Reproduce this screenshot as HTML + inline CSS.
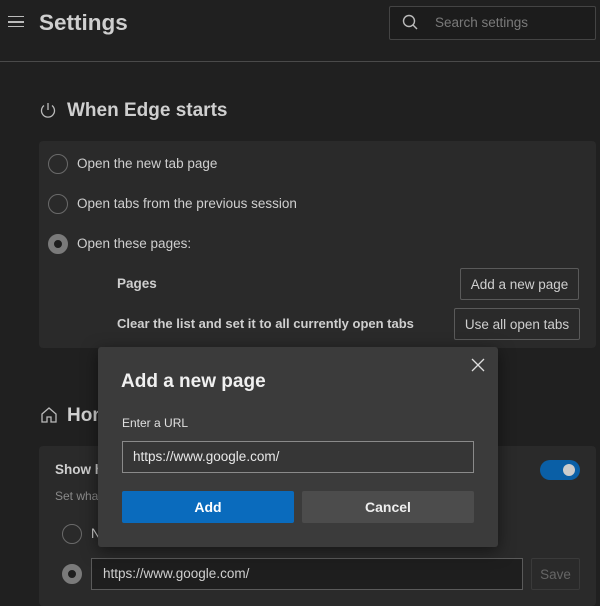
<!DOCTYPE html>
<html><head><style>
*{margin:0;padding:0;box-sizing:border-box}
body{width:600px;height:600px;background:#202020;font-family:"Liberation Sans",sans-serif;color:#d6d6d6;position:relative;overflow:hidden}
.a{position:absolute}
.card{background:#2a2a2a;border-radius:4px}
.radio{width:20px;height:20px;border:1.5px solid #6a6a6a;border-radius:50%}
.radio.on{border:6px solid #7a7a7a;background:#1e1e1e}
.t{font-size:13.5px;color:#cfcfcf;white-space:nowrap}
.btn{border:1px solid #5a5a5a;font-size:13.5px;color:#cfcfcf;display:flex;align-items:center;justify-content:center;border-radius:2px}
</style></head><body>
<div class="a" style="left:8px;top:16px;width:16px;height:11px;border-top:1.5px solid #bbb;border-bottom:1.5px solid #bbb"></div>
<div class="a" style="left:8px;top:21px;width:16px;height:1.5px;background:#bbb"></div>
<div class="a" style="left:39px;top:10px;font-size:22.5px;font-weight:bold;color:#cfcfcf">Settings</div>
<div class="a" style="left:389px;top:6px;width:207px;height:34px;border:1px solid #444;background:#1c1c1c;border-radius:2px"></div>
<svg class="a" style="left:401px;top:13px" width="20" height="20"><circle cx="8" cy="8" r="5.5" fill="none" stroke="#bbb" stroke-width="1.4"/><line x1="12" y1="12" x2="16" y2="16" stroke="#bbb" stroke-width="1.4"/></svg>
<div class="a" style="left:435px;top:15px;font-size:13.5px;color:#7a7a7a">Search settings</div>
<div class="a" style="left:0;top:61px;width:600px;height:1px;background:#4a4a4a"></div>
<svg class="a" style="left:39px;top:101px" width="18" height="18"><path d="M5 4.5A6.5 6.5 0 1 0 13 4.5" fill="none" stroke="#bbb" stroke-width="1.3"/><line x1="9" y1="2" x2="9" y2="9" stroke="#bbb" stroke-width="1.3"/></svg>
<div class="a" style="left:67px;top:100px;font-size:19px;font-weight:bold;color:#cfcfcf">When Edge starts</div>
<div class="a card" style="left:39px;top:141px;width:557px;height:207px"></div>
<div class="a radio" style="left:48px;top:154px"></div><div class="a t" style="left:77px;top:156px">Open the new tab page</div>
<div class="a radio" style="left:48px;top:194px"></div><div class="a t" style="left:77px;top:196px">Open tabs from the previous session</div>
<div class="a radio on" style="left:48px;top:234px"></div><div class="a t" style="left:77px;top:236px">Open these pages:</div>
<div class="a t" style="left:117px;top:276px;font-weight:bold">Pages</div>
<div class="a btn" style="left:460px;top:268px;width:119px;height:32px">Add a new page</div>
<div class="a t" style="left:117px;top:316px;font-weight:bold;font-size:13px">Clear the list and set it to all currently open tabs</div>
<div class="a btn" style="left:454px;top:308px;width:126px;height:32px">Use all open tabs</div>
<svg class="a" style="left:40px;top:406px" width="18" height="18"><path d="M2 8L9 2L16 8V16H11V11H7V16H2Z" fill="none" stroke="#bbb" stroke-width="1.3"/></svg>
<div class="a" style="left:67px;top:405px;font-size:19px;font-weight:bold;color:#cfcfcf">Home</div>
<div class="a card" style="left:39px;top:446px;width:557px;height:160px"></div>
<div class="a t" style="left:55px;top:462px;font-weight:bold">Show home</div>
<div class="a" style="left:540px;top:460px;width:40px;height:20px;border-radius:10px;background:#0a5fa6"></div>
<div class="a" style="left:563px;top:464px;width:12px;height:12px;border-radius:50%;background:#ccc"></div>
<div class="a" style="left:55px;top:489px;font-size:12px;color:#8a8a8a">Set what</div>
<div class="a radio" style="left:62px;top:524px"></div><div class="a t" style="left:91px;top:526px">New</div>
<div class="a radio on" style="left:62px;top:564px"></div>
<div class="a" style="left:91px;top:558px;width:432px;height:32px;border:1px solid #5a5a5a;background:#1e1e1e"></div>
<div class="a t" style="left:103px;top:566px">https://www.google.com/</div>
<div class="a btn" style="left:531px;top:558px;width:49px;height:32px;border-color:#3a3a3a;color:#666">Save</div>
<div class="a" style="left:98px;top:347px;width:400px;height:200px;background:#3b3b3b;border-radius:3px;box-shadow:0 4px 16px rgba(0,0,0,.5)"></div>
<svg class="a" style="left:471px;top:358px" width="14" height="14"><path d="M1 1L13 13M13 1L1 13" stroke="#ddd" stroke-width="1.3"/></svg>
<div class="a" style="left:121px;top:371px;font-size:19px;font-weight:bold;color:#f0f0f0">Add a new page</div>
<div class="a" style="left:122px;top:416px;font-size:12px;color:#e0e0e0">Enter a URL</div>
<div class="a" style="left:122px;top:441px;width:352px;height:32px;border:1px solid #8a8a8a;background:#363636"></div>
<div class="a t" style="left:133px;top:449px;color:#e8e8e8">https://www.google.com/</div>
<div class="a" style="left:122px;top:491px;width:172px;height:32px;background:#0a6bbd;color:#fff;font-size:14px;font-weight:bold;display:flex;align-items:center;justify-content:center;border-radius:2px">Add</div>
<div class="a" style="left:302px;top:491px;width:172px;height:32px;background:#4c4c4c;color:#eee;font-size:14px;font-weight:bold;display:flex;align-items:center;justify-content:center;border-radius:2px">Cancel</div>
</body></html>
